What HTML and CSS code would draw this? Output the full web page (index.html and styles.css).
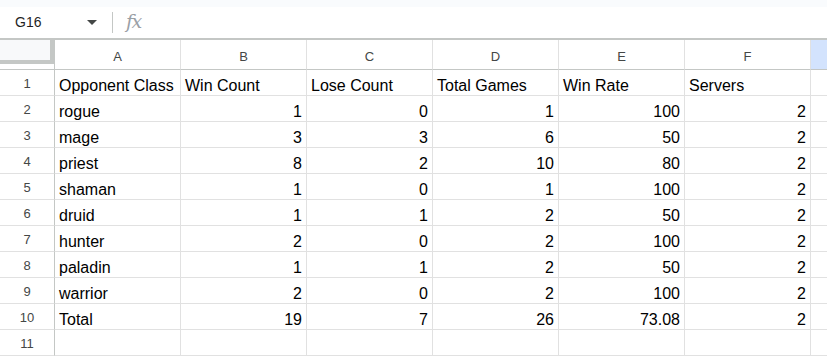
FILE: index.html
```html
<!DOCTYPE html>
<html>
<head>
<meta charset="utf-8">
<link rel="stylesheet" href="styles.css">
</head>
<body>
<div class="app">
  <div class="topstrip"></div>
  <div class="fbar">
    <div class="namebox">
      <span class="ref">G16</span>
      <svg class="caret" width="10" height="5" viewBox="0 0 10 5"><path d="M0 0 L10 0 L5 5 Z" fill="#444746"/></svg>
    </div>
    <div class="vsep"></div>
    <span class="fx">fx</span>
  </div>
  <div class="sheet">
    <div class="corner"><div class="corner-in"></div></div>
    <div class="ch">A</div><div class="ch">B</div><div class="ch">C</div><div class="ch">D</div><div class="ch">E</div><div class="ch">F</div><div class="ch sel"></div>

    <div class="rh">1</div><div class="c">Opponent Class</div><div class="c">Win Count</div><div class="c">Lose Count</div><div class="c">Total Games</div><div class="c">Win Rate</div><div class="c">Servers</div><div class="c"></div>
    <div class="rh">2</div><div class="c">rogue</div><div class="c n">1</div><div class="c n">0</div><div class="c n">1</div><div class="c n">100</div><div class="c n">2</div><div class="c"></div>
    <div class="rh">3</div><div class="c">mage</div><div class="c n">3</div><div class="c n">3</div><div class="c n">6</div><div class="c n">50</div><div class="c n">2</div><div class="c"></div>
    <div class="rh">4</div><div class="c">priest</div><div class="c n">8</div><div class="c n">2</div><div class="c n">10</div><div class="c n">80</div><div class="c n">2</div><div class="c"></div>
    <div class="rh">5</div><div class="c">shaman</div><div class="c n">1</div><div class="c n">0</div><div class="c n">1</div><div class="c n">100</div><div class="c n">2</div><div class="c"></div>
    <div class="rh">6</div><div class="c">druid</div><div class="c n">1</div><div class="c n">1</div><div class="c n">2</div><div class="c n">50</div><div class="c n">2</div><div class="c"></div>
    <div class="rh">7</div><div class="c">hunter</div><div class="c n">2</div><div class="c n">0</div><div class="c n">2</div><div class="c n">100</div><div class="c n">2</div><div class="c"></div>
    <div class="rh">8</div><div class="c">paladin</div><div class="c n">1</div><div class="c n">1</div><div class="c n">2</div><div class="c n">50</div><div class="c n">2</div><div class="c"></div>
    <div class="rh">9</div><div class="c">warrior</div><div class="c n">2</div><div class="c n">0</div><div class="c n">2</div><div class="c n">100</div><div class="c n">2</div><div class="c"></div>
    <div class="rh">10</div><div class="c">Total</div><div class="c n">19</div><div class="c n">7</div><div class="c n">26</div><div class="c n">73.08</div><div class="c n">2</div><div class="c"></div>
    <div class="rh">11</div><div class="c"></div><div class="c"></div><div class="c"></div><div class="c"></div><div class="c"></div><div class="c"></div><div class="c"></div>
  </div>
</div>
</body>
</html>
```

FILE: styles.css
```css
* { box-sizing: border-box; }
html, body { margin: 0; padding: 0; background: #fff; }
body { width: 827px; height: 356px; overflow: hidden; font-family: "Liberation Sans", Arial, sans-serif; }
.app { display: flex; flex-direction: column; }
.topstrip { height: 7px; background: #f9fbfd; }
.fbar {
  height: 33px;
  display: flex;
  align-items: center;
  border-bottom: 2px solid #c4c7c5;
}
.namebox {
  width: 112px;
  display: flex;
  align-items: center;
  justify-content: space-between;
  padding: 0 15px 1px 15px;
}
.ref { font-size: 14px; color: #1f1f1f; }
.caret { display: block; margin-top: 1px; }
.vsep { width: 1px; height: 21px; background: #c4c7c5; }
.fx {
  margin-left: 13px;
  font-family: "DejaVu Serif", "Liberation Serif", serif;
  font-style: italic;
  font-size: 19px;
  color: #9aa0a6;
  letter-spacing: -1.5px;
  padding-bottom: 3px;
}
.sheet {
  display: grid;
  grid-template-columns: 55px repeat(6, 126px) 20px;
  grid-template-rows: 30px repeat(11, 26px);
}
.corner {
  border-right: 1px solid #c4c7c5;
  border-bottom: 1px solid #c4c7c5;
}
.corner-in {
  width: 54px;
  height: 24px;
  background: #f8f9fa;
  border-right: 4px solid #c4c7c5;
  border-bottom: 4px solid #c4c7c5;
}
.ch {
  display: flex;
  align-items: center;
  justify-content: center;
  font-size: 13px;
  color: #444746;
  border-right: 1px solid #e1e1e1;
  border-bottom: 1px solid #c4c7c5;
  padding-top: 3px;
}
.ch.sel { background: #d3e3fd; border-right: none; }
.rh {
  display: flex;
  align-items: center;
  justify-content: center;
  font-size: 13px;
  color: #444746;
  border-right: 1px solid #c4c7c5;
  border-bottom: 1px solid #e1e1e1;
  padding-top: 1px;
}
.c {
  display: flex;
  align-items: flex-end;
  font-size: 16px;
  color: #000;
  padding: 0 4px 0 4px;
  border-right: 1px solid #e1e1e1;
  border-bottom: 1px solid #e1e1e1;
  white-space: nowrap;
  overflow: visible;
  line-height: 18px;
}
.c.n { justify-content: flex-end; }
```
